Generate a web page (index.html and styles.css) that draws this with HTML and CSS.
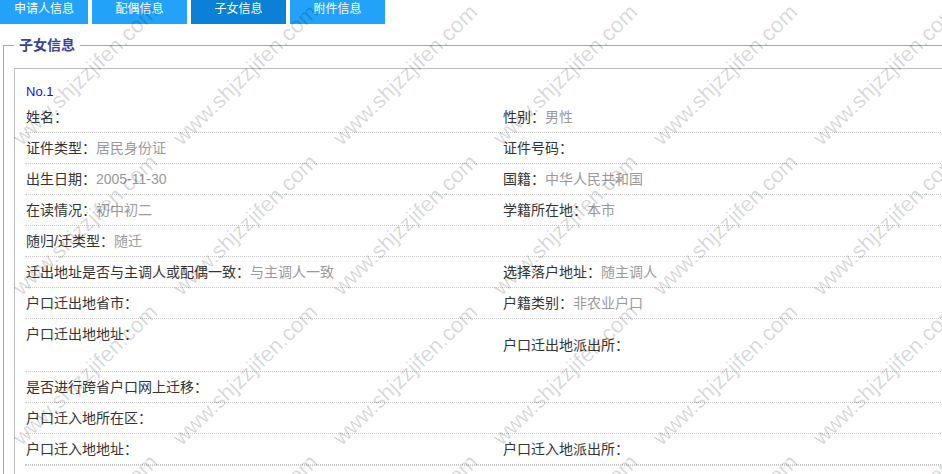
FILE: index.html
```html
<!DOCTYPE html>
<html lang="zh-CN">
<head>
  <meta charset="UTF-8">
  <title>子女信息</title>
  <link rel="stylesheet" href="styles.css">
</head>
<body>
  <div class="tabs">
    <a href="#" class="tab">申请人信息</a>
    <a href="#" class="tab">配偶信息</a>
    <a href="#" class="tab active">子女信息</a>
    <a href="#" class="tab">附件信息</a>
  </div>

  <fieldset class="section">
    <legend>子女信息</legend>
    <div class="child-box">
      <div class="child-no">No.1</div>

      <div class="info-row">
        <div class="cell">姓名：</div>
        <div class="cell">性别：<span class="val">男性</span></div>
      </div>
      <div class="info-row">
        <div class="cell">证件类型：<span class="val">居民身份证</span></div>
        <div class="cell">证件号码：</div>
      </div>
      <div class="info-row">
        <div class="cell">出生日期：<span class="val">2005-11-30</span></div>
        <div class="cell">国籍：<span class="val">中华人民共和国</span></div>
      </div>
      <div class="info-row">
        <div class="cell">在读情况：<span class="val">初中初二</span></div>
        <div class="cell">学籍所在地：<span class="val">本市</span></div>
      </div>
      <div class="info-row">
        <div class="cell">随归/迁类型：<span class="val">随迁</span></div>
        <div class="cell"></div>
      </div>
      <div class="info-row">
        <div class="cell">迁出地址是否与主调人或配偶一致：<span class="val">与主调人一致</span></div>
        <div class="cell">选择落户地址：<span class="val">随主调人</span></div>
      </div>
      <div class="info-row">
        <div class="cell">户口迁出地省市：</div>
        <div class="cell">户籍类别：<span class="val">非农业户口</span></div>
      </div>
      <div class="info-row">
        <div class="cell">户口迁出地地址：<div class="addr"></div></div>
        <div class="cell middle">户口迁出地派出所：</div>
      </div>
      <div class="info-row">
        <div class="cell">是否进行跨省户口网上迁移：</div>
        <div class="cell"></div>
      </div>
      <div class="info-row">
        <div class="cell">户口迁入地所在区：</div>
        <div class="cell"></div>
      </div>
      <div class="info-row">
        <div class="cell">户口迁入地地址：</div>
        <div class="cell">户口迁入地派出所：</div>
      </div>
      <div class="info-row">
        <div class="cell"></div>
        <div class="cell"></div>
      </div>
    </div>
  </fieldset>

  <div class="watermark">
    <div class="wm"><span>www.shjzzjifen.com</span></div>
    <div class="wm"><span>www.shjzzjifen.com</span></div>
    <div class="wm"><span>www.shjzzjifen.com</span></div>
    <div class="wm"><span>www.shjzzjifen.com</span></div>
    <div class="wm"><span>www.shjzzjifen.com</span></div>
    <div class="wm"><span>www.shjzzjifen.com</span></div>
    <div class="wm"><span>www.shjzzjifen.com</span></div>
    <div class="wm"><span>www.shjzzjifen.com</span></div>
    <div class="wm"><span>www.shjzzjifen.com</span></div>
    <div class="wm"><span>www.shjzzjifen.com</span></div>
    <div class="wm"><span>www.shjzzjifen.com</span></div>
    <div class="wm"><span>www.shjzzjifen.com</span></div>
    <div class="wm"><span>www.shjzzjifen.com</span></div>
    <div class="wm"><span>www.shjzzjifen.com</span></div>
    <div class="wm"><span>www.shjzzjifen.com</span></div>
    <div class="wm"><span>www.shjzzjifen.com</span></div>
    <div class="wm"><span>www.shjzzjifen.com</span></div>
    <div class="wm"><span>www.shjzzjifen.com</span></div>
    <div class="wm"><span>www.shjzzjifen.com</span></div>
    <div class="wm"><span>www.shjzzjifen.com</span></div>
    <div class="wm"><span>www.shjzzjifen.com</span></div>
    <div class="wm"><span>www.shjzzjifen.com</span></div>
    <div class="wm"><span>www.shjzzjifen.com</span></div>
    <div class="wm"><span>www.shjzzjifen.com</span></div>
  </div>
</body>
</html>
```

FILE: styles.css
```css
* {
  margin: 0;
  padding: 0;
  box-sizing: border-box;
}

body {
  position: relative;
  width: 942px;
  height: 474px;
  overflow: hidden;
  background: #ffffff;
  font-family: "Liberation Sans", "Noto Sans CJK SC", sans-serif;
  font-size: 14px;
  color: #333333;
}

.tabs {
  display: flex;
  gap: 4px;
  height: 24px;
}

.tab {
  width: 95px;
  height: 24px;
  line-height: 18px;
  text-align: center;
  font-size: 12px;
  color: #ffffff;
  text-decoration: none;
  background: #22a2f9;
}

.tab:first-child {
  width: 88px;
}

.tab.active {
  background: #0a80d6;
}

.section {
  width: 1000px;
  min-height: 500px;
  margin: 13px 0 0 3px;
  padding: 15px 0 0 10px;
  border: 1px solid #a8a8a8;
}

.section legend {
  padding: 0 5px;
  font-size: 14px;
  line-height: 16px;
  font-weight: bold;
  color: #34449a;
}

.child-box {
  border: 1px solid #bcbcbc;
  padding: 12px 0 0 10px;
  min-height: 420px;
}

.child-no {
  padding-left: 1px;
  font-size: 13px;
  line-height: 21px;
  color: #1010f0;
}

.info-row {
  display: grid;
  grid-template-columns: 477px 1fr;
  border-bottom: 1px dotted #cccccc;
}

.cell {
  padding-left: 1px;
  line-height: 30px;
  white-space: nowrap;
}

.cell.middle {
  align-self: center;
}

.addr {
  height: 22px;
}

.val {
  color: #9a9a9a;
}

.watermark {
  position: absolute;
  top: 0;
  left: 5px;
  display: grid;
  grid-template-columns: repeat(6, 160px);
  grid-auto-rows: 150px;
  pointer-events: none;
}

.wm {
  display: flex;
  align-items: center;
  justify-content: center;
}

.wm span {
  display: block;
  white-space: nowrap;
  font-family: "Liberation Sans", sans-serif;
  font-size: 22px;
  color: rgba(0, 0, 0, 0.16);
  transform: rotate(-44deg);
}
```
